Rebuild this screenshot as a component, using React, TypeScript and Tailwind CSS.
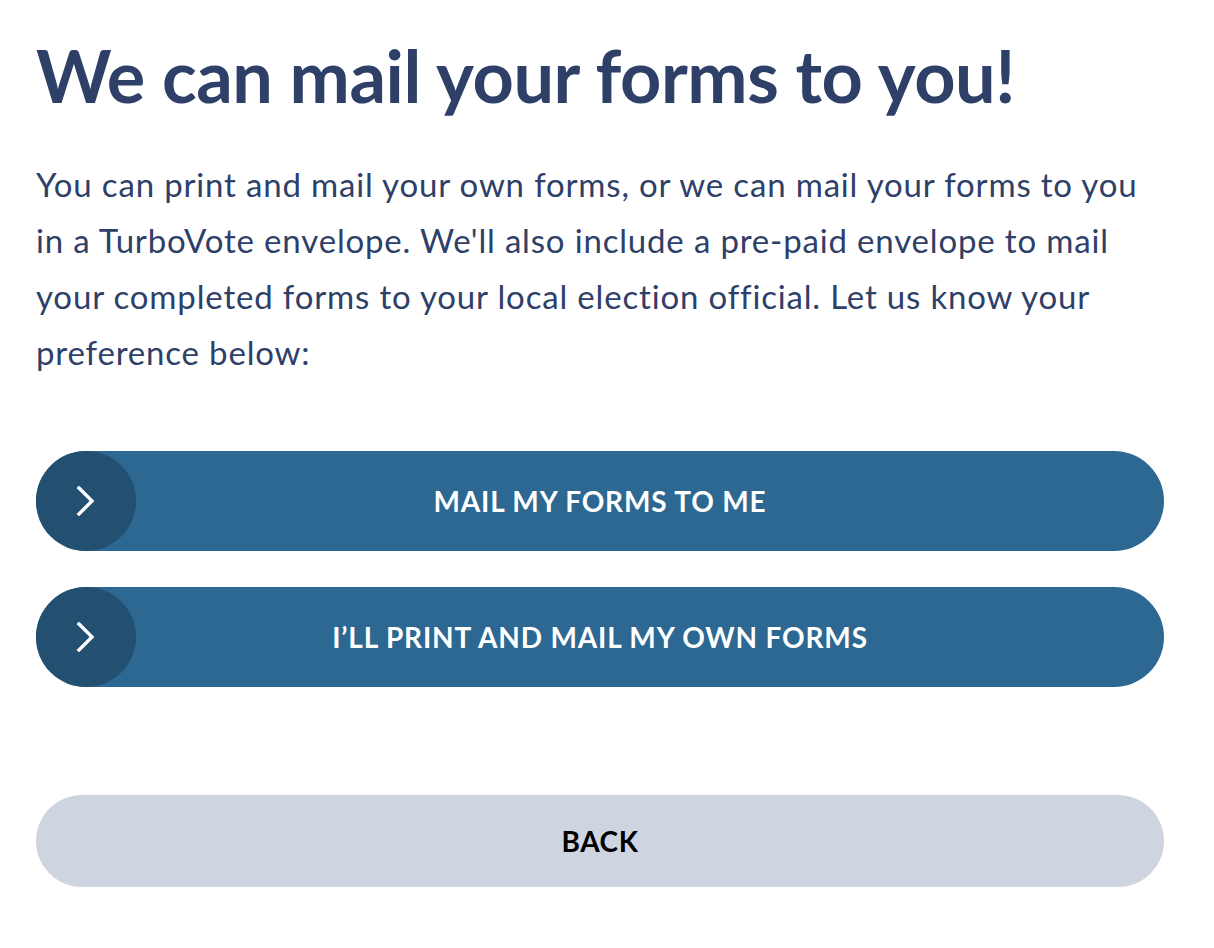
import React from 'react';

function Chevron() {
  return (
    <svg width="20" height="30" viewBox="0 0 20 30" fill="none" aria-hidden="true">
      <path d="M3 2 L16 15 L3 28" stroke="white" strokeWidth="3.4" strokeLinecap="square" />
    </svg>
  );
}

function ActionButton({ label }: { label: string }) {
  return (
    <button className="relative flex h-[100px] w-full items-center rounded-full bg-[#2c6891] text-white">
      <span className="absolute left-0 top-0 flex h-[100px] w-[100px] items-center justify-center rounded-full bg-[#234f70]">
        <Chevron />
      </span>
      <span className="w-full text-center text-[28px] font-bold uppercase tracking-[0.03em]">{label}</span>
    </button>
  );
}

export default function App() {
  return (
    <div className="min-h-[948px] bg-white px-[36px] pt-[32px] font-['Lato','Open_Sans',sans-serif] text-[#2e4068]">
      <h1 className="text-[72px] font-bold leading-[86px] tracking-[-0.006em]">We can mail your forms to you!</h1>

      <p className="mt-[38px] max-w-[1128px] text-[33px] leading-[56px] tracking-[0.025em]">
        You can print and mail your own forms, or we can mail your forms to you in a TurboVote envelope. We'll also include a pre-paid envelope to mail your completed forms to your local election official. Let us know your preference below:
      </p>

      <div className="mt-[71px] flex w-[1128px] flex-col gap-[36px]">
        <ActionButton label="Mail my forms to me" />
        <ActionButton label="I’ll print and mail my own forms" />
      </div>

      <button className="mt-[108px] h-[92px] w-[1128px] rounded-full bg-[#ced4e0] text-[28px] font-bold tracking-[0.02em] text-black">
        BACK
      </button>
    </div>
  );
}
